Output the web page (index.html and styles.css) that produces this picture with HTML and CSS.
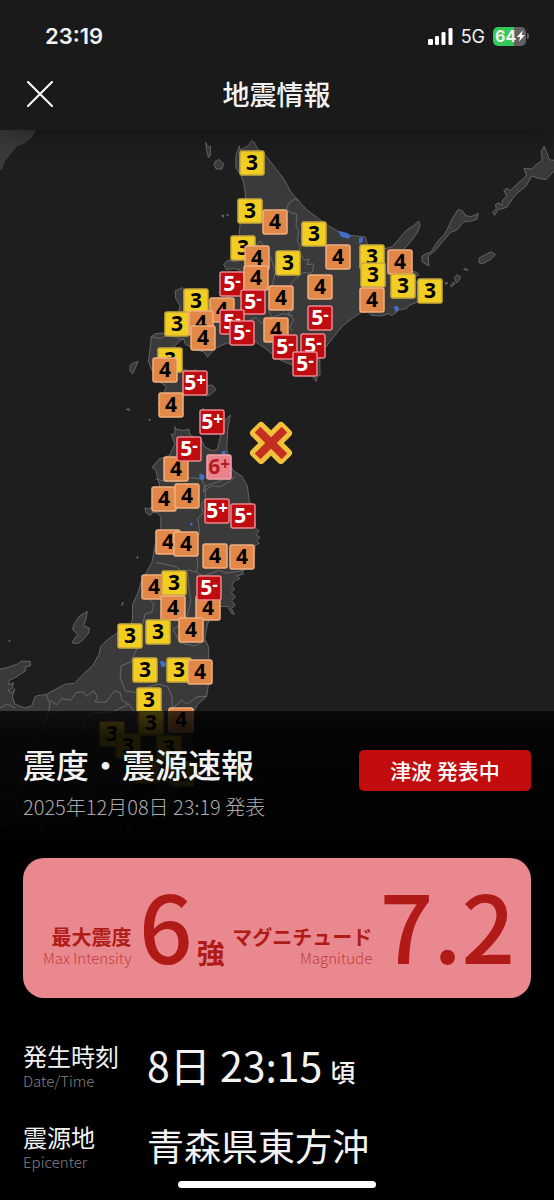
FILE: index.html
```html
<!DOCTYPE html>
<html lang="ja">
<head>
<meta charset="utf-8">
<meta name="viewport" content="width=device-width, initial-scale=1">
<title>地震情報</title>
<link rel="stylesheet" href="styles.css">
</head>
<body>
<div class="screen">
  <header class="header">
    <div class="status">
      <span class="status-time">23:19</span>
      <div class="status-icons">
        <svg class="signal" viewBox="0 0 25 17" aria-hidden="true"><rect x="0" y="11" width="5" height="6" rx="1.3"/><rect x="7" y="8" width="4" height="9" rx="1.3"/><rect x="13.500" y="4" width="4" height="13" rx="1.3"/><rect x="20.500" y="0" width="4" height="17" rx="1.3"/></svg>
        <span class="network">5G</span>
        <span class="battery"><span class="battery-level">64</span><svg class="bolt" viewBox="0 0 10 14" aria-hidden="true"><path d="M7 1 1 8h3.200L3 13l6-7H5.800z"/></svg></span>
      </div>
    </div>
    <div class="titlebar">
      <button class="close" type="button" aria-label="閉じる"><svg viewBox="0 0 26 26" aria-hidden="true"><path d="M1 1 25 25M25 1 1 25"/></svg></button>
      <h1 class="title">地震情報</h1>
    </div>
  </header>

  <main>
    <svg class="map" viewBox="0 130 554 750" preserveAspectRatio="xMidYMin slice" role="img" aria-label="震度分布図">
      <g transform="translate(0 130) scale(.3533 .3827)">
        <g class="land">
          <path class="far" d="M-5-5H105L92 18 70 35 50 42 30 62 12 85 8 100-5 110z"/>
          <path d="M677 42 680 52 695 45 705 40 712 28 720 32 728 48 748 62 780 100 805 130 822 160 845 185 870 210 900 230 930 250 958 265 990 275 1035 280 1040 300 1080 312 1110 305 1150 262 1170 250 1185 238 1189 250 1180 270 1160 295 1130 325 1120 350 1150 365 1180 372 1186 378 1172 385 1180 400 1195 400 1190 430 1200 445 1175 452 1158 458 1150 467 1130 470 1120 478 1108 485 1100 480 1080 486 1050 484 1040 475 1020 478 1000 490 970 512 945 540 920 570 905 600 906 640 898 645 895 657 885 645 830 615 790 600 750 570 725 555 700 545 670 550 640 558 610 570 600 580 587 594 578 580 555 575 525 560 520 545 510 550 490 570 480 585 490 610 510 625 545 630 552 626 575 645 590 668 600 666 612 678 600 688 588 695 560 690 540 680 515 700 500 730 480 740 455 735 448 715 460 700 470 670 440 650 420 605 425 570 428 540 440 532 470 530 480 520 500 490 510 460 497 440 496 420 515 412 524 418 545 425 580 445 620 455 640 440 660 420 650 400 670 385 680 365 660 362 640 365 633 350 645 340 670 345 690 330 685 300 677 270 680 240 690 200 695 170 690 140 682 118 668 100 667 70z"/>
          <path d="M495 775 500 782 520 785 535 782 537 795 548 802 570 810 580 828 600 838 615 835 624 800 620 790 590 795 575 790 568 765 575 727 585 745 620 750 635 760 652 745 645 780 642 830 645 860 660 890 685 905 700 930 706 970 720 1000 722 1040 734 1048 725 1058 736 1064 727 1073 734 1080 722 1085 720 1110 715 1140 685 1152 690 1160 670 1165 680 1172 664 1178 656 1190 664 1200 655 1208 666 1220 656 1230 666 1242 655 1250 664 1266 654 1262 645 1245 620 1245 605 1255 595 1270 585 1300 580 1330 590 1350 592 1410 590 1450 585 1480 560 1500 548 1520 540 1560 545 1620 560 1660 545 1690 510 1710 490 1750 465 1780 445 1790 430 1770 450 1730 430 1690 400 1680 380 1700 350 1740 330 1750 312 1790 288 1800 275 1770 262 1740 240 1740 215 1790 200 1812 140 1818 80 1808 30 1815-10 1820V1410L20 1405 50 1395 60 1388 85 1388 87 1400 70 1404 74 1412 45 1430 26 1438 25 1450 38 1444 35 1460 22 1465 34 1470 42 1460 35 1480 42 1500 70 1510 90 1505 98 1482 105 1478 130 1475 160 1460 185 1448 210 1446 240 1418 262 1400 280 1370 285 1350 300 1335 330 1315 365 1300 375 1280 375 1240 390 1210 400 1180 430 1130 440 1080 455 1040 455 1010 445 1000 430 1000 425 1007 413 1000 410 987 420 990 432 985 450 990 460 960 445 905 440 888 430 882 450 860 480 850 495 820 485 795 495 795z"/>
          <path d="M1214 355 1195 345 1194 330 1203 325 1220 318 1240 290 1260 270 1270 252 1278 235 1297 207 1310 212 1318 224 1335 226 1354 218 1350 233 1335 238 1312 240 1295 260 1275 268 1250 295 1235 312 1212 330z"/>
          <path d="M1400 223 1394 215 1405 205 1402 195 1412 190 1420 198 1422 185 1434 172 1426 158 1435 152 1445 158 1465 140 1490 120 1483 100 1505 102 1520 88 1535 80 1532 55 1540 42 1548 60 1555 78 1580 80 1570 105 1545 130 1520 125 1505 120 1490 145 1465 165 1450 180 1435 202 1410 208z"/>
          <path d="M1356 335 1375 325 1390 318 1402 325 1390 338 1365 350 1356 347zM1286 385 1294 378 1304 384 1298 394 1292 400zM1276 404 1284 397 1287 403 1277 410zM1312 364 1320 362 1325 367zM1260 398 1268 400 1262 404zM609 82 620 77 633 88 628 102 612 102 606 92zM582 32 588 45 596 42 595 68 590 72 585 55zM627 224 634 222 632 228zM641 222 647 221 645 225zM368 615 378 609 391 605 384 620 376 637 368 630zM358 730 364 728 367 733zM421 757 425 755 424 760zM204 1340 210 1330 220 1318 205 1305 210 1290 225 1270 247 1258 243 1280 236 1295 254 1302 250 1315 235 1332 220 1342zM343 1242 350 1233 347 1240zM387 1116 391 1115 389 1120zM25 1334 29 1335 26 1337zM365 1810 374 1822 366 1835 360 1822z"/>
        </g>
        <g class="border">
          <path d="M845 185 835 180 818 190 812 205 820 215 840 220 838 250 845 265 842 290 850 305 845 320 862 340 875 338 870 352 888 350 885 370 875 375 860 372 840 385 825 400 815 420 820 440 830 470 815 480 832 495 820 515 828 525"/>
          <path d="M690 325 720 310 735 290 745 300 765 330 780 370 772 400 780 430 760 470 770 490 800 480 830 485M700 500 725 490 740 505 750 500M428 540 455 545 475 535 520 548M520 420 525 470 540 500"/>
          <path d="M440 912 470 918 500 920 540 908 570 912 580 930 600 925 640 910 655 915 665 905M580 930 575 945 600 930 625 932 650 918M580 930 582 960 570 980 575 1000 560 1015 565 1050 555 1080 560 1140 555 1155"/>
          <path d="M440 1130 470 1135 500 1142 515 1155 535 1150 555 1155 575 1165 600 1158 620 1150 640 1158 665 1155 690 1150M530 1155 535 1200 540 1230 530 1270 515 1290 490 1305M400 1210 420 1220 435 1240 430 1260 410 1265 405 1290"/>
          <path d="M375 1290 400 1300 390 1350 370 1390 343 1400 340 1430 355 1465 385 1470 420 1455 450 1448 475 1455 486 1480 488 1510 515 1490 530 1500 560 1480 585 1480M490 1305 510 1340 550 1348 580 1335"/>
          <path d="M130 1475 142 1500 135 1530 120 1560 100 1600M142 1490 160 1502 175 1485 200 1490 215 1470 235 1468 245 1480 265 1465 275 1480 270 1495 300 1495 325 1465 340 1470 345 1490 365 1500M230 1568 240 1540 260 1525 320 1520 365 1500 390 1535 380 1600 340 1640 300 1680 260 1700M0 1510 20 1500 42 1510M100 1600 80 1700 40 1740 0 1730M260 1700 230 1750"/>
        </g>
        <path class="water" d="M956 264 970 266 985 270 994 278 985 284 965 278zM1016 282 1028 280 1027 292 1016 298zM1114 462 1124 460 1130 468 1120 476zM1180 412 1186 415 1183 424zM628 840 638 838 638 848 628 850zM564 900 572 898 580 905 575 915 565 912zM537 1028 544 1026 545 1032 539 1034zM452 1390 460 1386 470 1394 468 1402 458 1404zM110 1820 120 1815 125 1830 112 1835z"/>
      </g>
      <g id="markers"></g>
      <g class="epicenter" transform="translate(271 443) rotate(45)">
        <g class="halo"><rect x="-23" y="-9" width="46" height="18" rx="4"/><rect x="-9" y="-23" width="18" height="46" rx="4"/></g>
        <g class="cross"><rect x="-19" y="-4" width="38" height="8"/><rect x="-4" y="-19" width="8" height="38"/></g>
      </g>
    </svg>

    <section class="panel">
      <div class="report">
        <div>
          <h2 class="report-title">震度・震源速報</h2>
          <p class="report-time">2025年12月08日 23:19 発表</p>
        </div>
        <button class="tsunami" type="button">津波 発表中</button>
      </div>

      <div class="card">
        <div class="labels"><b>最大震度</b><span>Max Intensity</span></div>
        <div class="value">6<small>強</small></div>
        <div class="labels"><b>マグニチュード</b><span>Magnitude</span></div>
        <div class="value">7.2</div>
      </div>

      <dl class="details">
        <dt>発生時刻<span>Date/Time</span></dt>
        <dd>8日 23:15<small>頃</small></dd>
        <dt>震源地<span>Epicenter</span></dt>
        <dd class="place">青森県東方沖</dd>
      </dl>
      <div class="home-indicator"></div>
    </section>
  </main>
</div>
<script src="script.js"></script>
</body>
</html>
```
FILE: styles.css
```css
* { box-sizing: border-box; }

body {
  margin: 0;
  background: #000;
  color: #f2f2f2;
  font-family: "Noto Sans CJK JP", sans-serif;
}

h1, h2, p, dl, dd { margin: 0; }
button { border: 0; font-family: inherit; color: inherit; cursor: pointer; }

.screen { min-height: 100vh; }

.header {
  position: relative;
  height: 130px;
  padding: 20px 28px 0 27px;
  background: #1a1a1a;
  box-shadow: 0 4px 24px rgba(0, 0, 0, .4);
}

.status {
  display: flex;
  align-items: center;
  justify-content: space-between;
  height: 32px;
  padding-left: 18px;
  font-family: Inter, sans-serif;
}
.status-time { font-size: 22px; font-weight: 600; }
.status-icons { display: flex; align-items: center; gap: 8px; }
.signal { width: 25px; height: 17px; fill: #fff; }
.network { font-size: 18px; }

.battery {
  position: relative;
  display: flex;
  align-items: center;
  width: 33px;
  height: 19px;
  border-radius: 5px;
  background: linear-gradient(90deg, #34c759 64%, #606060 64%);
}
.battery::after {
  content: "";
  position: absolute;
  right: -3px;
  width: 2px;
  height: 6px;
  border-radius: 0 2px 2px 0;
  background: #606060;
}
.battery-level { padding-left: 2px; font-size: 16px; font-weight: 700; line-height: 19px; }
.bolt { width: 10px; height: 14px; fill: #fff; }

.titlebar {
  display: grid;
  grid-template-columns: 26px 1fr 26px;
  align-items: center;
  margin-top: 22px;
}
.close { width: 26px; height: 26px; padding: 0; background: none; }
.close svg { display: block; fill: none; stroke: #fff; stroke-width: 2; stroke-linecap: round; }
.title { font-size: 27px; font-weight: 500; line-height: 40px; text-align: center; }

.map { display: block; width: 100%; height: 750px; background: #1e1e1e; }
.land path { fill: #3a3a3a; stroke: #777; stroke-width: 2; stroke-linejoin: round; }
.land .far { stroke: none; }
.border path { fill: none; stroke: #777; stroke-width: 2; stroke-linejoin: round; }
.water { fill: #446fc9; }

.marker rect { stroke-width: 1.5; }
.marker text {
  font-family: "Open Sans", sans-serif;
  font-size: 21px;
  font-weight: 700;
  text-anchor: middle;
}
.level-3 rect { fill: #f3ce22; stroke: #c9ab3c; }
.level-4 rect { fill: #e18848; stroke: #f0ae80; }
.level-5 rect { fill: #be0c10; stroke: #eb858c; }
.level-5 text { fill: #fff; }
.level-6 rect { fill: #ea838c; stroke: #f5a2aa; }
.level-6 text { fill: #b31c1f; }
.marker .sign { font-size: 17px; }

.halo { fill: #f1c13c; }
.cross { fill: #c32f20; }

.panel {
  position: relative;
  margin-top: -169px;
  padding: 31px 23px 12px;
  background: linear-gradient(rgba(0, 0, 0, .72), rgba(0, 0, 0, .88) 24px, rgba(0, 0, 0, .92) 100px, #000 170px);
}

.report { display: flex; align-items: flex-start; justify-content: space-between; gap: 16px; }
.report-title { font-size: 33px; font-weight: 500; line-height: 44px; }
.report-time { font-size: 20px; font-weight: 300; line-height: 42px; color: #aaa; }
.tsunami {
  flex: none;
  width: 172px;
  height: 41px;
  margin-top: 8px;
  padding: 0;
  border-radius: 5px;
  background: #c20c0d;
  color: #fff;
  font-size: 21px;
  font-weight: 500;
  line-height: 41px;
}

.card {
  display: flex;
  align-items: last baseline;
  justify-content: space-between;
  min-height: 140px;
  margin-top: 30px;
  padding: 24px 16px 30px 20px;
  border-radius: 21px;
  background: #e9898f;
  color: #b01b18;
}
.labels { display: flex; flex-direction: column; align-items: flex-end; text-align: right; }
.labels b { font-size: 20px; font-weight: 700; line-height: 22px; }
.labels span { font-size: 15px; font-weight: 300; line-height: 20px; opacity: .7; }
.value { font-size: 94px; font-weight: 500; line-height: 82px; }
.value small { margin-left: 4px; font-size: 28px; font-weight: 700; line-height: 1; }

.details {
  display: grid;
  grid-template-columns: 124px 1fr;
  row-gap: 31px;
  margin-top: 43px;
}
.details dt { font-size: 24px; font-weight: 400; line-height: 30px; }
.details dt span { display: block; font-size: 15px; font-weight: 300; line-height: 20px; color: #808080; }
.details dd { font-size: 41px; font-weight: 400; line-height: 46px; }
.details small { margin-left: 8px; font-size: 25px; font-weight: 500; line-height: 1; }
.details .place { font-size: 37px; }

.home-indicator {
  width: 198px;
  height: 7px;
  margin: 9px auto 0;
  border-radius: 4px;
  background: #fff;
}
```
FILE: script.js
```js
// Observed intensities: [intensity, x, y], drawn in order.
const observations = [
  ["3", 252, 163], ["3", 250, 211], ["4", 275, 222], ["3", 314, 234],
  ["3", 243, 248], ["4", 257, 258], ["4", 338, 257], ["3", 288, 263],
  ["3", 372, 257], ["3", 373, 275], ["4", 400, 262], ["3", 403, 286],
  ["3", 430, 291], ["4", 372, 300], ["5-", 232, 284], ["4", 256, 278],
  ["4", 320, 287], ["4", 281, 298], ["5-", 253, 302], ["3", 196, 301],
  ["4", 222, 310], ["3", 177, 324], ["4", 201, 323], ["5-", 232, 322],
  ["5-", 242, 333], ["4", 203, 338], ["5-", 320, 318], ["4", 276, 330],
  ["5-", 285, 347], ["5-", 313, 346], ["5-", 305, 364], ["3", 170, 360],
  ["4", 165, 370], ["5+", 195, 383], ["4", 171, 405], ["5+", 212, 422],
  ["4", 176, 469], ["5-", 189, 449], ["6+", 219, 467], ["4", 164, 499],
  ["4", 187, 496], ["5+", 217, 511], ["5-", 243, 516], ["4", 168, 542],
  ["4", 186, 544], ["4", 215, 556], ["4", 242, 557], ["4", 154, 587],
  ["3", 174, 583], ["4", 173, 608], ["4", 208, 608], ["5-", 209, 588],
  ["4", 191, 630], ["3", 130, 636], ["3", 158, 632], ["3", 145, 670],
  ["3", 179, 670], ["4", 200, 672], ["3", 149, 700], ["3", 151, 723],
  ["4", 181, 720], ["3", 112, 734], ["3", 128, 746], ["3", 169, 748],
  ["3", 147, 771], ["3", 182, 774]
];

const svgNs = "http://www.w3.org/2000/svg";

function make(name, attributes, text) {
  const node = document.createElementNS(svgNs, name);
  for (const key in attributes) node.setAttribute(key, attributes[key]);
  if (text) node.textContent = text;
  return node;
}

const layer = document.getElementById("markers");
for (const [intensity, x, y] of observations) {
  const [digit, sign] = intensity;
  const marker = make("g", { class: "marker level-" + digit, transform: `translate(${x} ${y})` });
  marker.append(make("rect", { x: -12, y: -12, width: 24, height: 24, rx: 2 }));
  const label = make("text", { y: 7 }, digit);
  if (sign) label.append(make("tspan", { class: "sign", dy: -4 }, sign));
  marker.append(label);
  layer.append(marker);
}
```
